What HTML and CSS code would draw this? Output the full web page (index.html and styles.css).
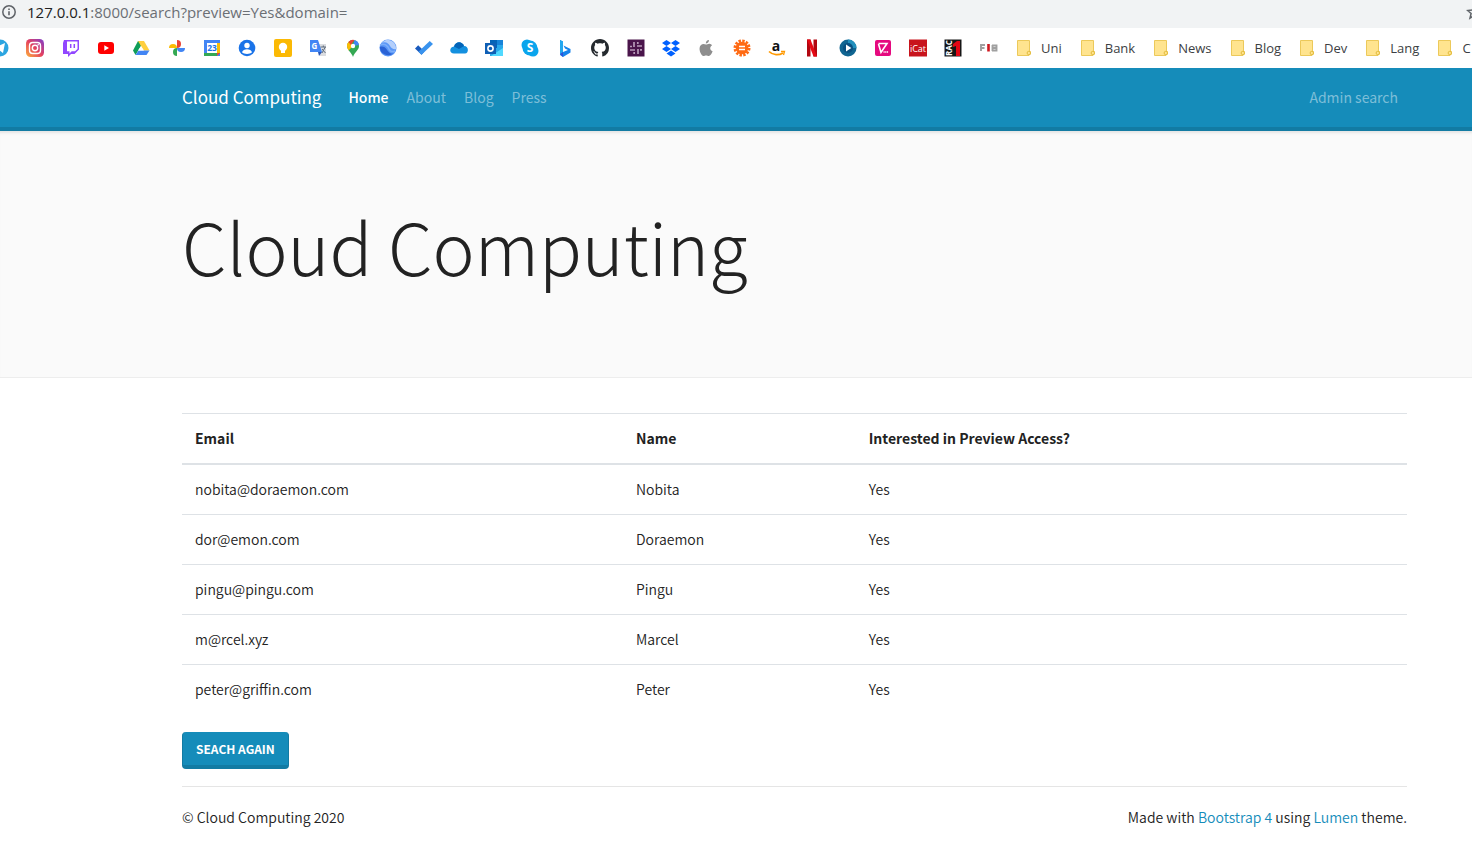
FILE: index.html
```
<!DOCTYPE html>
<html lang="en">
<head>
<meta charset="utf-8">
<title>Cloud Computing</title>
<link rel="stylesheet" href="styles.css">
</head>
<body>
<div class="address">
  <svg class="info" viewBox="0 0 16 16"><circle cx="8" cy="8" r="6.2" fill="none" stroke="#5f6368" stroke-width="1.5"/><path d="M8 7.2v4M8 4.4v1.5" stroke="#5f6368" stroke-width="1.6"/></svg>
  <span class="url"><span class="host">127.0.0.1</span>:8000/search?preview=Yes&amp;domain=</span>
  <svg class="star" viewBox="0 0 16 16"><path d="M8 1.8l1.8 4.3 4.6.4-3.5 3 1.1 4.6L8 11.6l-4 2.500 1.100-4.600-3.500-3 4.600-.4z" fill="none" stroke="#5f6368" stroke-width="1.500"/></svg>
</div>
<div class="bookmarks">
  <div class="sites">
    <svg viewBox="0 0 18 18"><circle cx="9" cy="9" r="8.500" fill="#2ca5e0"/><path d="M3 9l11-5-2 10-4-3z" fill="#fff"/></svg>
    <svg viewBox="0 0 18 18"><defs><linearGradient id="ig" x1="0" y1="1" x2="1" y2="0"><stop offset="0" stop-color="#fdb13c"/><stop offset=".5" stop-color="#e4405f"/><stop offset="1" stop-color="#7b3fd0"/></linearGradient></defs><rect width="18" height="18" rx="4.500" fill="url(#ig)"/><rect x="3.500" y="3.500" width="11" height="11" rx="3.200" fill="none" stroke="#fff" stroke-width="1.400"/><circle cx="9" cy="9" r="2.700" fill="none" stroke="#fff" stroke-width="1.400"/><circle cx="12.200" cy="5.800" r=".8" fill="#fff"/></svg>
    <svg viewBox="0 0 18 18"><path d="M2 1h15v9.500L12.500 15H9l-3 3v-3H1V4z" fill="#9146ff"/><path d="M5 2.500h10.500V10L13 12.300H9.700L7.500 14.500v-2.200H5z" fill="#fff"/><path d="M8.700 5v4M12.300 5v4" stroke="#9146ff" stroke-width="1.500"/></svg>
    <svg viewBox="0 0 18 18"><rect x="1" y="3" width="16" height="12" rx="3" fill="#f00"/><path d="M7.300 6.300v5.400L12 9z" fill="#fff"/></svg>
    <svg viewBox="0 0 18 18"><path d="M6 2h6l-3 5-5.500 9L1 11.500z" fill="#0f9d58"/><path d="M6 2h6l5.500 9.500h-6z" fill="#ffcf3f"/><path d="M3.500 16l3-4.500h11L14.500 16z" fill="#4285f4"/><path d="M9 7l-3 4.500h6z" fill="#fff"/></svg>
    <svg viewBox="0 0 18 18"><path d="M9 9V1a4 4 0 0 1 0 8z" fill="#ea4335"/><path d="M9 9h8a4 4 0 0 1-8 0z" fill="#4285f4"/><path d="M9 9v8a4 4 0 0 1 0-8z" fill="#34a853"/><path d="M9 9H1a4 4 0 0 1 8 0z" fill="#fbbc04"/></svg>
    <svg viewBox="0 0 18 18"><path d="M1 1h16v16H1z" fill="#4285f4"/><path d="M14 4h3v10h-3z" fill="#fbbc04"/><path d="M1 14h13v3H1z" fill="#34a853"/><path d="M14 14h3l-3 3z" fill="#ea4335"/><path d="M4 4h10v10H4z" fill="#fff"/><text x="9" y="12.300" class="mark" font-size="8.500" text-anchor="middle" fill="#1a73e8">23</text></svg>
    <svg viewBox="0 0 18 18"><circle cx="9" cy="9" r="8.300" fill="#1a73e8"/><circle cx="9" cy="6.500" r="2.700" fill="#fff"/><path d="M4 13.300c1-4 9-4 10 0-2 2.300-8 2.300-10 0z" fill="#fff"/></svg>
    <svg viewBox="0 0 18 18"><rect width="18" height="18" rx="2" fill="#fbb904"/><circle cx="9" cy="8" r="4.200" fill="#fff"/><path d="M7 11h4v3H7z" fill="#fff"/></svg>
    <svg viewBox="0 0 18 18"><path d="M7 5h10v12h-6z" fill="#dadce0"/><path d="M1 1h8l4 12H1z" fill="#4285f4"/><path d="M9 13h4l-3 4z" fill="#2855b5"/><text x="2.500" y="10" class="mark" font-size="8" fill="#fff">G</text><path d="M11.500 8H17M14.300 6.500V8M13 14l3.300-6M13 10l3.500 4" stroke="#5f6c7c" fill="none"/></svg>
    <svg viewBox="0 0 18 18"><path d="M3 7a6 6 0 0 1 12 0c0 4-4 5.500-6 11-1-4-6-7-6-11z" fill="#34a853"/><path d="M3 7a6 6 0 0 1 2-4.500L9 7l-4.500 4.500A8 8 0 0 1 3 7z" fill="#fbbc04"/><path d="M4.500 3A6 6 0 0 1 10.500 1L7 6z" fill="#ea4335"/><path d="M10.500 1A6 6 0 0 1 15 6l-6 1z" fill="#4285f4"/><circle cx="9" cy="7" r="2.200" fill="#fff"/></svg>
    <svg viewBox="0 0 18 18"><circle cx="9" cy="9" r="8.500" fill="#5a97f7"/><path d="M2 4C7 2 10 5 11 7s4 4 6 3a8.500 8.500 0 0 0-10-9z" fill="#b4cffb"/><path d="M.8 8c5-2 7 3 9 5s4 1.500 5 1.200A8.500 8.500 0 0 1 .8 8z" fill="#2a62d5"/><path d="M1 6c5-2 8 1 9 4s4 3 6 2" fill="none" stroke="#7caefa" stroke-width="1.500"/></svg>
    <svg viewBox="0 0 18 18"><path d="M0 9.500L3.200 6.300 9.500 12.500 6.500 15.800z" fill="#195abd"/><path d="M6.500 15.800L3.500 12.700 14.700 2 18 5z" fill="#3993ee"/></svg>
    <svg viewBox="0 0 18 18"><path d="M4 7.500C6 2 12 2 14 7c5 0 5 7.500 1 7.500H4c-5 0-5-6.500 0-7z" fill="#1490df"/><path d="M4 7.500C6 2 12 2 14 7l-5 3z" fill="#0364b8"/></svg>
    <svg viewBox="0 0 18 18"><path d="M5 1h13v16H5z" fill="#28a8ea"/><path d="M5 1h7v8H5z" fill="#0364b8"/><path d="M12 1h6v5h-6z" fill="#1784d9"/><path d="M6 17l12-8v8z" fill="#50d9ff"/><rect y="4" width="11" height="11" fill="#0f5fb5"/><circle cx="5.500" cy="9.500" r="2.600" fill="none" stroke="#fff" stroke-width="1.600"/></svg>
    <svg viewBox="0 0 18 18"><circle cx="6" cy="6" r="5.500" fill="#0aa5ed"/><circle cx="12" cy="12" r="5.500" fill="#0aa5ed"/><circle cx="9" cy="9" r="7.500" fill="#0aa5ed"/><text x="9" y="13" class="mark" font-size="12" text-anchor="middle" fill="#fff">S</text></svg>
    <svg viewBox="0 0 18 18"><path d="M4 1l3 1.500V13l5-2-3-1.500L7.500 6.500l7 3.500v3.500L7 18l-3-2z" fill="#1683eb"/><path d="M4 1l3 1.500V13l-3 3z" fill="#23a8ef"/><path d="M4 15l3-2v5z" fill="#3250d8"/></svg>
    <svg viewBox="0 0 16 16"><path fill="#24292e" d="M8 0C3.580 0 0 3.580 0 8c0 3.540 2.290 6.530 5.470 7.590.4.070.550-.170.550-.380 0-.190-.010-.820-.010-1.490-2.010.370-2.530-.490-2.690-.940-.090-.230-.480-.940-.820-1.130-.280-.150-.680-.520-.010-.530.630-.010 1.080.580 1.230.820.720 1.210 1.870.870 2.330.660.070-.520.280-.870.510-1.070-1.780-.2-3.640-.890-3.640-3.950 0-.870.310-1.590.820-2.150-.080-.2-.360-1.020.080-2.120 0 0 .670-.210 2.200.820.640-.180 1.320-.270 2-.270s1.360.090 2 .270c1.530-1.040 2.200-.820 2.200-.820.440 1.100.160 1.920.080 2.120.510.560.820 1.270.820 2.150 0 3.070-1.870 3.750-3.650 3.950.290.250.540.730.540 1.480 0 1.070-.010 1.930-.010 2.200 0 .210.150.460.550.380A8.010 8.010 0 0 0 16 8c0-4.420-3.580-8-8-8z"/></svg>
    <svg viewBox="0 0 18 18"><path d="M.5 .5h17v17H.5z" fill="#4a154b"/><path d="M7 3v5M11 10v5M3 11h5M10 7h5M10.800 3v2M7.200 13v2M3 7.500h2M13 10.800h2" stroke="#b79ab8" stroke-width="1.700"/></svg>
    <svg viewBox="0 0 18 18"><path d="M4.500 1L9 4 4.500 7 0 4zM13.500 1L18 4l-4.500 3L9 4zM4.500 7L9 10l-4.500 3L0 10zM13.500 7l4.500 3-4.500 3L9 10zM9 11.500l4.500 3L9 17.500l-4.500-3z" fill="#0061ff"/></svg>
    <svg viewBox="0 0 18 18"><path d="M12 1c0 2-1.500 3.500-3.200 3.500C8.800 2.500 10 1.200 12 1zM9 5.500c1 0 2-1 3.500-.8 1 .1 2 .6 2.600 1.500-3 2-2 5 .5 6-.8 2.300-2.200 4.800-3.800 4.800-1 0-1.500-.6-2.700-.6s-1.700.6-2.600.6c-2.500 0-6-8-2.500-11 2-1.700 4-.5 5-.5z" fill="#8e8e8e"/></svg>
    <svg viewBox="0 0 18 18"><circle cx="9" cy="9" r="6.300" fill="#ff6a13"/><circle cx="9" cy="9" r="7.100" fill="none" stroke="#ff6a13" stroke-width="2.800" stroke-dasharray="2.400 1.320"/><path d="M6 7.500h6M6 10.500h6" stroke="#fff" stroke-width="1.400"/></svg>
    <svg viewBox="0 0 18 18"><text x="8" y="11.500" class="mark" font-size="14" text-anchor="middle" fill="#111">a</text><path d="M1 12.500c4 4 10 4 14 1.500" stroke="#f90" stroke-width="1.700" fill="none"/><path d="M13 12.500h3.500L15.500 16" fill="none" stroke="#f90" stroke-width="1.300"/></svg>
    <svg viewBox="0 0 18 18"><path d="M4 .5h3.500v17H4zM10.500 .5H14v17h-3.500z" fill="#b20710"/><path d="M4 .5h3.500l6.500 17h-3.500z" fill="#e50914"/></svg>
    <svg viewBox="0 0 18 18"><circle cx="9" cy="9" r="8.500" fill="#106591"/><path d="M9 .5A8.500 8.500 0 0 1 17.500 9L9 9z" fill="#2290bd"/><circle cx="9" cy="9" r="5" fill="#095080"/><path d="M7 5.500v7L12.300 9z" fill="#fff"/></svg>
    <svg viewBox="0 0 18 18"><rect x="1" y="1" width="16" height="16" rx="2" fill="#e5097f"/><path d="M4.500 4.500h8.500L7 13.500 4.500 5" fill="none" stroke="#fff" stroke-width="1.600"/><path d="M9.500 13h5" stroke="#fff" stroke-width="1.600" stroke-dasharray="1.200 .5"/></svg>
    <svg viewBox="0 0 18 18"><path d="M0 .5h18v17H0z" fill="#c8141d"/><text x="9" y="13" class="thin" font-size="9" text-anchor="middle" fill="#fff">iCat</text></svg>
    <svg viewBox="0 0 18 18"><path d="M.5 .5h17v17H.5z" fill="#161616"/><text transform="translate(8 17) rotate(-90)" class="mark" font-size="8" fill="#fff">RAC</text><path d="M9 5l4-3h3v15h-4V7L9 8z" fill="#e30613"/></svg>
    <svg viewBox="0 0 18 18"><path d="M1 12V6h4M1 9h3.500M12.500 6v6M12 6.500h4.500v5H12M12 9h4.500" fill="none" stroke="#a0a0a0" stroke-width="1.900"/><path d="M8.500 5v7.500" stroke="#d01820" stroke-width="2.600"/></svg>
  </div>
  <div class="folders">
    <span class="folder"><svg viewBox="0 0 14 16"><path d="M.5 .5h12v11h1V14l-1.500 1.500H.5z" fill="#ffe48f" stroke="#ecc95a"/><circle cx="11.800" cy="13" r="1.700" fill="#ffe48f" stroke="#e3bc3f"/></svg>Uni</span>
    <span class="folder"><svg viewBox="0 0 14 16"><path d="M.5 .5h12v11h1V14l-1.500 1.500H.5z" fill="#ffe48f" stroke="#ecc95a"/><circle cx="11.800" cy="13" r="1.700" fill="#ffe48f" stroke="#e3bc3f"/></svg>Bank</span>
    <span class="folder"><svg viewBox="0 0 14 16"><path d="M.5 .5h12v11h1V14l-1.500 1.500H.5z" fill="#ffe48f" stroke="#ecc95a"/><circle cx="11.800" cy="13" r="1.700" fill="#ffe48f" stroke="#e3bc3f"/></svg>News</span>
    <span class="folder"><svg viewBox="0 0 14 16"><path d="M.5 .5h12v11h1V14l-1.500 1.500H.5z" fill="#ffe48f" stroke="#ecc95a"/><circle cx="11.800" cy="13" r="1.700" fill="#ffe48f" stroke="#e3bc3f"/></svg>Blog</span>
    <span class="folder"><svg viewBox="0 0 14 16"><path d="M.5 .5h12v11h1V14l-1.500 1.500H.5z" fill="#ffe48f" stroke="#ecc95a"/><circle cx="11.800" cy="13" r="1.700" fill="#ffe48f" stroke="#e3bc3f"/></svg>Dev</span>
    <span class="folder"><svg viewBox="0 0 14 16"><path d="M.5 .5h12v11h1V14l-1.500 1.500H.5z" fill="#ffe48f" stroke="#ecc95a"/><circle cx="11.800" cy="13" r="1.700" fill="#ffe48f" stroke="#e3bc3f"/></svg>Lang</span>
    <span class="folder"><svg viewBox="0 0 14 16"><path d="M.5 .5h12v11h1V14l-1.500 1.500H.5z" fill="#ffe48f" stroke="#ecc95a"/><circle cx="11.800" cy="13" r="1.700" fill="#ffe48f" stroke="#e3bc3f"/></svg>C</span>
  </div>
</div>
<nav class="navbar">
  <a class="brand" href="#">Cloud Computing</a>
  <a class="nav-link active" href="#">Home</a>
  <a class="nav-link" href="#">About</a>
  <a class="nav-link" href="#">Blog</a>
  <a class="nav-link" href="#">Press</a>
  <a class="nav-link admin" href="#">Admin search</a>
</nav>
<header class="jumbotron"><h1>Cloud Computing</h1></header>
<main class="container">
  <table class="results">
    <thead><tr><th class="col-email">Email</th><th class="col-name">Name</th><th>Interested in Preview Access?</th></tr></thead>
    <tbody>
      <tr><td>nobita@doraemon.com</td><td>Nobita</td><td>Yes</td></tr>
      <tr><td>dor@emon.com</td><td>Doraemon</td><td>Yes</td></tr>
      <tr><td>pingu@pingu.com</td><td>Pingu</td><td>Yes</td></tr>
      <tr><td>m@rcel.xyz</td><td>Marcel</td><td>Yes</td></tr>
      <tr><td>peter@griffin.com</td><td>Peter</td><td>Yes</td></tr>
    </tbody>
  </table>
  <button class="btn" type="button">SEACH AGAIN</button>
  <footer class="footer">
    <span>© Cloud Computing 2020</span>
    <span>Made with <a href="#">Bootstrap 4</a> using <a href="#">Lumen</a> theme.</span>
  </footer>
</main>
</body>
</html>
```
FILE: styles.css
```
* { box-sizing: border-box; }
body {
  margin: 0;
  background: #fff;
  color: #222;
  font: 350 14px/24px "Noto Sans CJK JP", sans-serif;
  overflow-x: hidden;
}
a { color: #158cba; text-decoration: none; }

.address {
  display: flex;
  align-items: center;
  height: 28px;
  padding: 0 0 4px 1px;
  background: #f1f3f4;
  color: #6b6f74;
  font: 15px/24px "Open Sans", sans-serif;
  overflow: hidden;
}
.info { width: 16px; height: 16px; margin-right: 10px; }
.host { color: #222; }
.star { flex: none; width: 16px; height: 16px; margin-left: auto; margin-right: -10px; }

.bookmarks {
  display: flex;
  align-items: center;
  height: 40px;
  overflow: hidden;
  font: 13px/20px "Open Sans", sans-serif;
  color: #3c4043;
}
.sites {
  display: flex;
  flex: none;
  justify-content: space-between;
  width: 1007px;
  margin-left: -9px;
}
.sites svg { width: 18px; height: 18px; }
.mark { font-family: "Open Sans", sans-serif; font-weight: 700; }
.thin { font-family: "Open Sans", sans-serif; }
.folders { display: flex; gap: 19px; margin-left: 19px; }
.folder { display: flex; align-items: center; gap: 10px; }
.folder svg { width: 14px; height: 16px; }

.navbar {
  display: flex;
  align-items: center;
  height: 63px;
  padding: 0 74px 2px 182px;
  background: #158cba;
  border-bottom: 4px solid #127ba3;
}
.brand { color: #fff; font-size: 17px; font-weight: 400; margin-right: 27px; }
.nav-link { color: rgba(255, 255, 255, .45); font-weight: 400; margin-right: 18px; }
.active { color: #fff; font-weight: 500; }
.admin { margin-left: auto; margin-right: 0; }

.jumbotron {
  padding: 66px 65px 83px 182px;
  background: #fafafa;
  border-bottom: 1px solid #ededed;
  box-shadow: inset 0 4px 3px -2px #e4e4e4;
}
h1 { margin: 0; font-size: 71px; line-height: 97px; font-weight: 300; }

.container { padding: 35px 65px 0 182px; }
.results { width: 100%; border-collapse: collapse; text-align: left; }
.results th, .results td { padding: 13px; border-top: 1px solid #dee2e6; line-height: 23px; }
.results thead th { border-bottom: 2px solid #dee2e6; font-weight: 700; }
.col-email { width: 36%; }
.col-name { width: 19%; }
.btn {
  display: block;
  height: 37px;
  margin: 18px 0 17px;
  padding: 0 13px;
  border: 0 solid #127ba3;
  border-width: 0 1px 4px;
  border-radius: 4px;
  background: #158cba;
  color: #fff;
  font: 700 12px/24px "Noto Sans CJK JP", sans-serif;
}
.footer { display: flex; justify-content: space-between; padding-top: 18px; border-top: 1px solid #e5e5e5; }
```
